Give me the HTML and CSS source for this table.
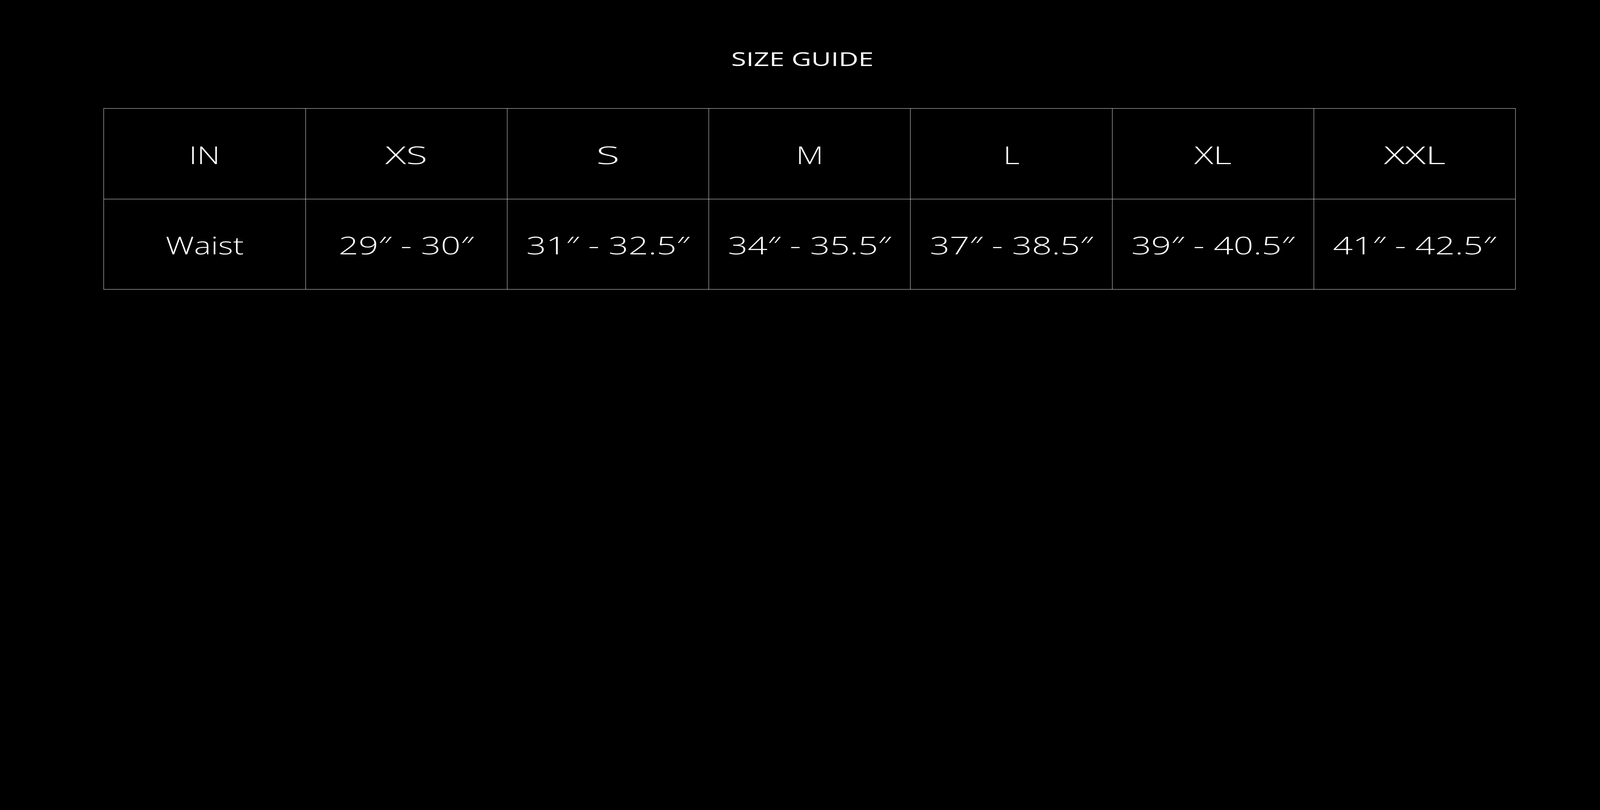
FILE: index.html
```html
<!DOCTYPE html>
<html lang="en">
<head>
<meta charset="utf-8">
<title>Size Guide</title>
<link rel="stylesheet" href="styles.css">
</head>
<body>
<main class="page">
  <h1 class="title"><span class="wide">SIZE GUIDE</span></h1>
  <div class="chart">
    <div class="cell head"><span class="wide">IN</span></div>
    <div class="cell head"><span class="wide w-xs">XS</span></div>
    <div class="cell head"><span class="wide w-s">S</span></div>
    <div class="cell head"><span class="wide">M</span></div>
    <div class="cell head"><span class="wide">L</span></div>
    <div class="cell head"><span class="wide w-xl">XL</span></div>
    <div class="cell head"><span class="wide w-xs">XXL</span></div>
    <div class="cell body"><span class="wide">Waist</span></div>
    <div class="cell body"><span class="wide num">29″ - 30″</span></div>
    <div class="cell body"><span class="wide num">31″ - 32.5″</span></div>
    <div class="cell body"><span class="wide num">34″ - 35.5″</span></div>
    <div class="cell body"><span class="wide num">37″ - 38.5″</span></div>
    <div class="cell body"><span class="wide num">39″ - 40.5″</span></div>
    <div class="cell body"><span class="wide num">41″ - 42.5″</span></div>
  </div>
</main>
</body>
</html>
```
FILE: styles.css
```css
* { box-sizing: border-box; }
html, body {
  margin: 0;
  padding: 0;
  background: #000;
}
body {
  min-height: 100vh;
  color: #fff;
  font-family: "Open Sans", "Liberation Sans", Arial, sans-serif;
  font-weight: 360;
}
.page {
  padding-top: 3.07vw;
}
.title {
  margin: 0 0 2.47vw 0;
  padding-left: 0.307vw;
  font-size: 1.2141vw;
  line-height: 1;
  font-weight: 380;
  text-align: center;
}
.wide {
  display: inline-block;
  transform: scaleX(1.3);
  white-space: nowrap;
}
.title .wide { transform: scaleX(1.4); }
.wide.num { transform: scaleX(1.42); }
.wide.w-xs { transform: scaleX(1.58); }
.wide.w-s { transform: scaleX(1.75); }
.wide.w-xl { transform: scaleX(1.45); }
.chart {
  display: grid;
  grid-template-columns: repeat(7, 1fr);
  width: 88.25vw;
  margin-left: 6.48vw;
  border-top: 0.042vw solid #dcdcdc;
  border-left: 0.042vw solid #dcdcdc;
}
.cell {
  display: flex;
  align-items: center;
  justify-content: center;
  padding-top: 0.1535vw;
  border-right: 0.042vw solid #dcdcdc;
  border-bottom: 0.042vw solid #dcdcdc;
  font-size: 1.535vw;
  line-height: 1;
}
.head { height: 5.666vw; }
.body { height: 5.638vw; }
```
